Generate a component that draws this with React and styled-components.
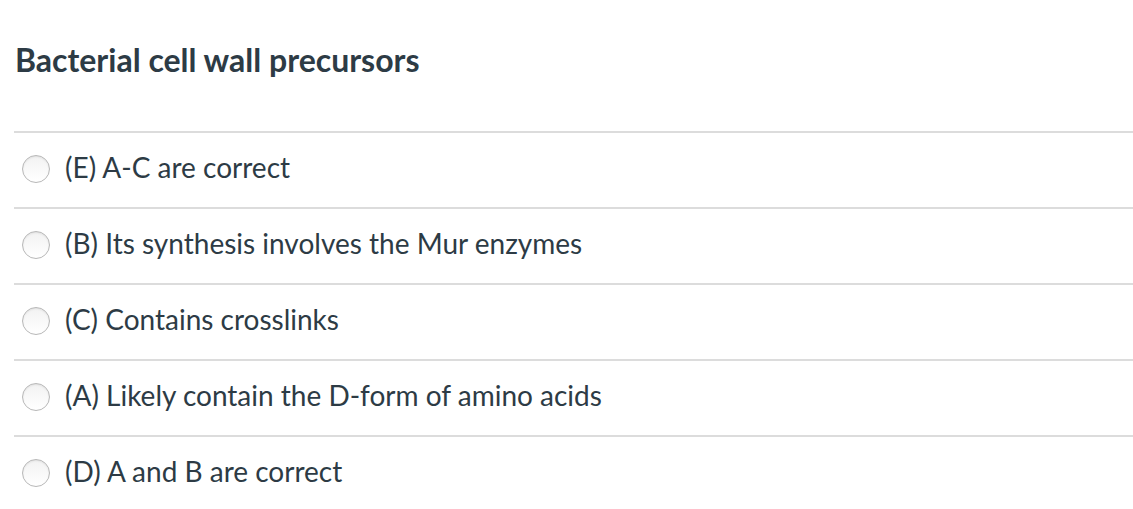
import React from "react";
import styled, { createGlobalStyle } from "styled-components";

const Global = createGlobalStyle`
  html, body { margin: 0; padding: 0; background: #fff; }
  body { font-family: Lato, "Open Sans", sans-serif; color: #2d3b45; }
`;

const Page = styled.div`
  padding-left: 14px;
  width: 1119px;
`;

const Title = styled.h2`
  margin: 0;
  height: 131px;
  display: flex;
  align-items: center;
  padding: 0 0 12px 1px;
  box-sizing: border-box;
  font-size: 32px;
  font-weight: 700;
  color: #2d3b45;
`;

const List = styled.div`
  display: flex;
  flex-direction: column;
`;

const Row = styled.label`
  display: flex;
  align-items: center;
  gap: 15px;
  height: 76px;
  box-sizing: border-box;
  border-top: 2px solid #dcdcdc;
  padding-left: 8px;
  padding-bottom: 6px;
  font-size: 28px;
  color: #2d3b45;
`;

const Radio = styled.span`
  width: 28px;
  height: 28px;
  margin-top: 3px;
  border-radius: 50%;
  box-sizing: border-box;
  border: 1px solid #b8b8b8;
  background: linear-gradient(#f2f2f2, #fff);
  box-shadow: inset 0 1px 2px rgba(0,0,0,0.08);
  flex: none;
`;

const answers = [
  "(E) A-C are correct",
  "(B) Its synthesis involves the Mur enzymes",
  "(C) Contains crosslinks",
  "(A) Likely contain the D-form of amino acids",
  "(D) A and B are correct",
];

export default function App() {
  return (
    <Page>
      <Global />
      <Title>Bacterial cell wall precursors</Title>
      <List>
        {answers.map((a) => (
          <Row key={a}>
            <Radio />
            <span>{a}</span>
          </Row>
        ))}
      </List>
    </Page>
  );
}
